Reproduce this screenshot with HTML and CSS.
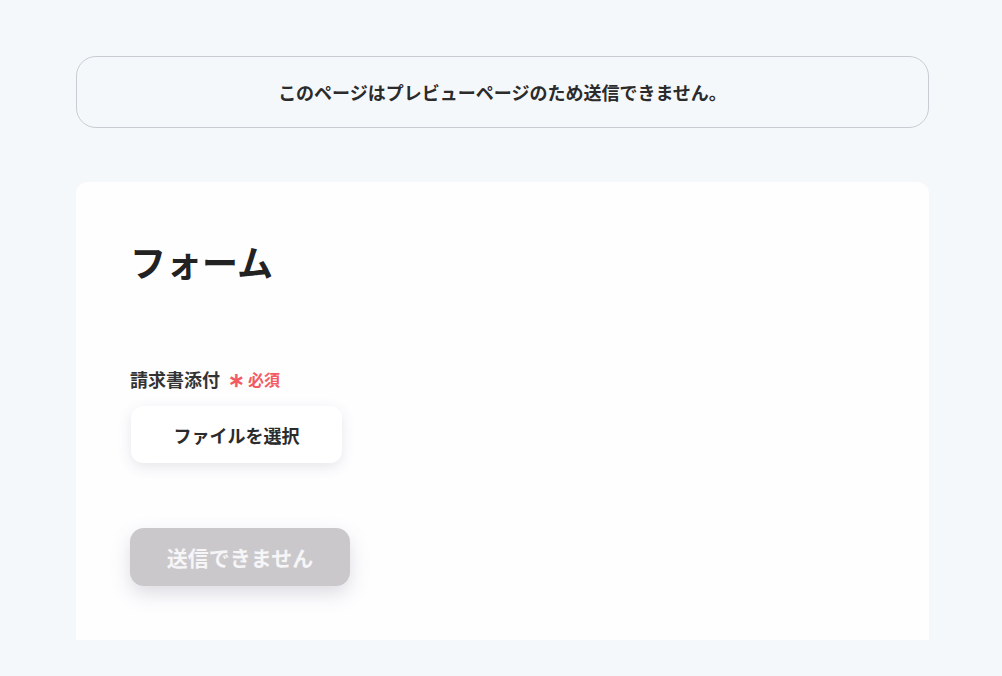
FILE: index.html
```html
<!DOCTYPE html>
<html lang="ja">
<head>
<meta charset="utf-8">
<link rel="stylesheet" href="styles.css">
</head>
<body>
<div class="page">
  <div class="notice">このページはプレビューページのため送信できません。</div>
  <div class="card">
    <h1 class="title">フォーム</h1>
    <div class="field">
      <div class="label">請求書添付<span class="req"><span class="star">∗</span>必須</span></div>
      <button class="file-btn" type="button">ファイルを選択</button>
    </div>
    <button class="submit" type="button">送信できません</button>
  </div>
</div>
</body>
</html>
```

FILE: styles.css
```css
html, body {
  margin: 0;
  padding: 0;
  background: #f5f8fb;
  font-family: "Noto Sans CJK JP", "Noto Sans", sans-serif;
  color: #2b2b2b;
}
.page {
  width: 853px;
  margin-left: 76px;
  padding-top: 56px;
}
.notice {
  box-sizing: border-box;
  height: 72px;
  border: 1px solid #c9cdd3;
  border-radius: 20px;
  display: flex;
  align-items: center;
  justify-content: center;
  font-size: 18px;
  font-weight: 700;
  color: #2b2b2b;
}
.card {
  margin-top: 54px;
  background: #fffeff;
  border-radius: 12px 12px 0 0;
  height: 458px;
  box-sizing: border-box;
  padding: 52px 54px 0;
}
.title {
  margin: 0;
  font-size: 36px;
  line-height: 54px;
  font-weight: 700;
  color: #222;
}
.field {
  margin-top: 78px;
}
.label {
  font-size: 18px;
  font-weight: 700;
  line-height: 27px;
  color: #333;
  display: flex;
  align-items: center;
}
.req {
  color: #f25b63;
  font-size: 16px;
  margin-left: 8px;
  display: flex;
  align-items: center;
}
.star {
  font-size: 20px;
  font-weight: 700;
  margin-right: 3px;
  line-height: 1;
  position: relative;
  top: -1px;
}
.file-btn {
  margin-top: 13px;
  margin-left: 1px;
  width: 211px;
  height: 57px;
  border: none;
  background: #fff;
  border-radius: 12px;
  box-shadow: 0 4px 14px rgba(40, 40, 70, 0.12);
  font-family: inherit;
  font-size: 18px;
  font-weight: 700;
  color: #2b2b2b;
  display: block;
}
.submit {
  display: block;
  margin-top: 65px;
  width: 220px;
  height: 58px;
  border: none;
  border-radius: 14px;
  background: #cbc8cc;
  color: #f6f5f7;
  font-family: inherit;
  font-size: 21px;
  font-weight: 700;
  box-shadow: 0 8px 20px rgba(60, 60, 90, 0.18);
}
```
